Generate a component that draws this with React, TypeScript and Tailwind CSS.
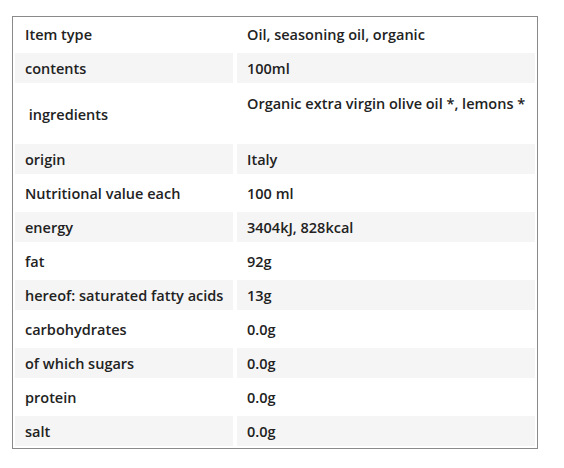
const rows: { label: string; value: string; tall?: boolean }[] = [
  { label: 'Item type', value: 'Oil, seasoning oil, organic' },
  { label: 'contents', value: '100ml' },
  { label: '\u00a0ingredients', value: 'Organic extra virgin olive oil *, lemons *', tall: true },
  { label: 'origin', value: 'Italy' },
  { label: 'Nutritional value each', value: '100 ml' },
  { label: 'energy', value: '3404kJ, 828kcal' },
  { label: 'fat', value: '92g' },
  { label: 'hereof: saturated fatty acids', value: '13g' },
  { label: 'carbohydrates', value: '0.0g' },
  { label: 'of which sugars', value: '0.0g' },
  { label: 'protein', value: '0.0g' },
  { label: 'salt', value: '0.0g' },
]

export default function App() {
  return (
    <div
      className="min-h-screen bg-white pt-[16px] pl-[12px] text-[#222] text-[14.5px] leading-[20px] font-semibold whitespace-nowrap"
      style={{ fontFamily: '"Open Sans", "Liberation Sans", sans-serif' }}
    >
      <div className="w-[526px] border border-[#8a8a8a] p-[2px] flex flex-col gap-1">
        {rows.map((r, i) => {
          const bg = i % 2 === 1 ? 'bg-[#f5f5f5]' : 'bg-white'
          return (
            <div key={r.label} className="grid grid-cols-[218px_298px] gap-1">
              <div className={`${bg} flex items-center pl-[10px] pt-[6px] pb-[4px]`}>{r.label}</div>
              {r.tall ? (
                <div className={`${bg} pl-[10px] pt-[7px] pb-[26px]`}>{r.value}</div>
              ) : (
                <div className={`${bg} flex items-center pl-[10px] pt-[6px] pb-[4px]`}>{r.value}</div>
              )}
            </div>
          )
        })}
      </div>
    </div>
  )
}
